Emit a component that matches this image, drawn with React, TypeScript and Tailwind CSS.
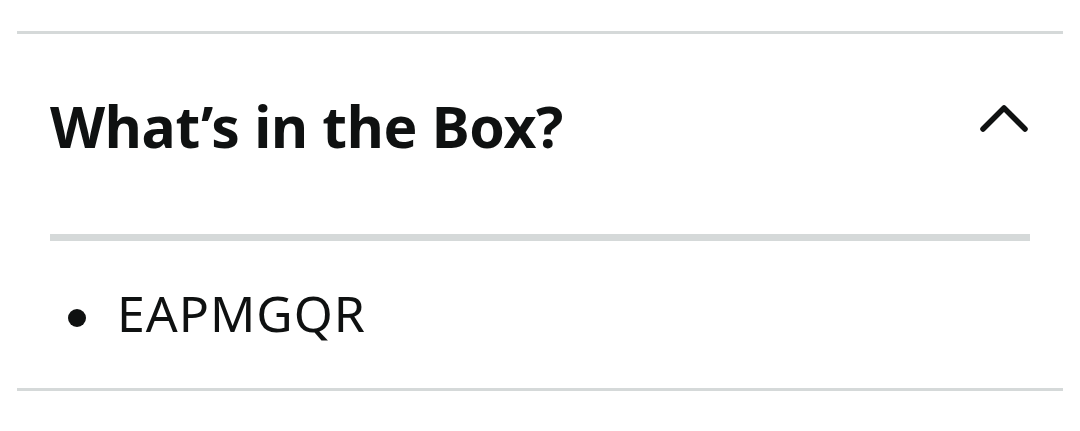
export default function App() {
  return (
    <div className="min-h-screen bg-white px-[17px] pt-[31px] font-['Noto_Sans',sans-serif] text-[#0f1111]">
      <div className="border-y-[3px] border-[#d5d9d9]">
        <div className="px-[33px]">
          {/* Header */}
          <div className="flex h-[200px] items-center justify-between">
            <h2 className="mb-[16px] text-[57px] font-bold leading-none tracking-[-0.3px]">
              What’s in the Box?
            </h2>
            <svg
              className="mb-[32px] h-[34px] w-[52px]"
              viewBox="0 0 52 34"
              fill="none"
              stroke="currentColor"
              strokeWidth={5.5}
              strokeLinecap="round"
              strokeLinejoin="round"
            >
              <path d="M5 28L26 7l21 21" />
            </svg>
          </div>
          <div className="h-[7px] bg-[#d5d9d9]" />
          {/* Content */}
          <ul className="flex h-[147px] items-center">
            <li className="flex items-center gap-[31px] pl-[18px]">
              <span className="mt-[6px] h-[18px] w-[18px] rounded-full bg-[#0f1111]" />
              <span className="mb-[4px] text-[50px] leading-none tracking-[1px]">EAPMGQR</span>
            </li>
          </ul>
        </div>
      </div>
    </div>
  )
}
